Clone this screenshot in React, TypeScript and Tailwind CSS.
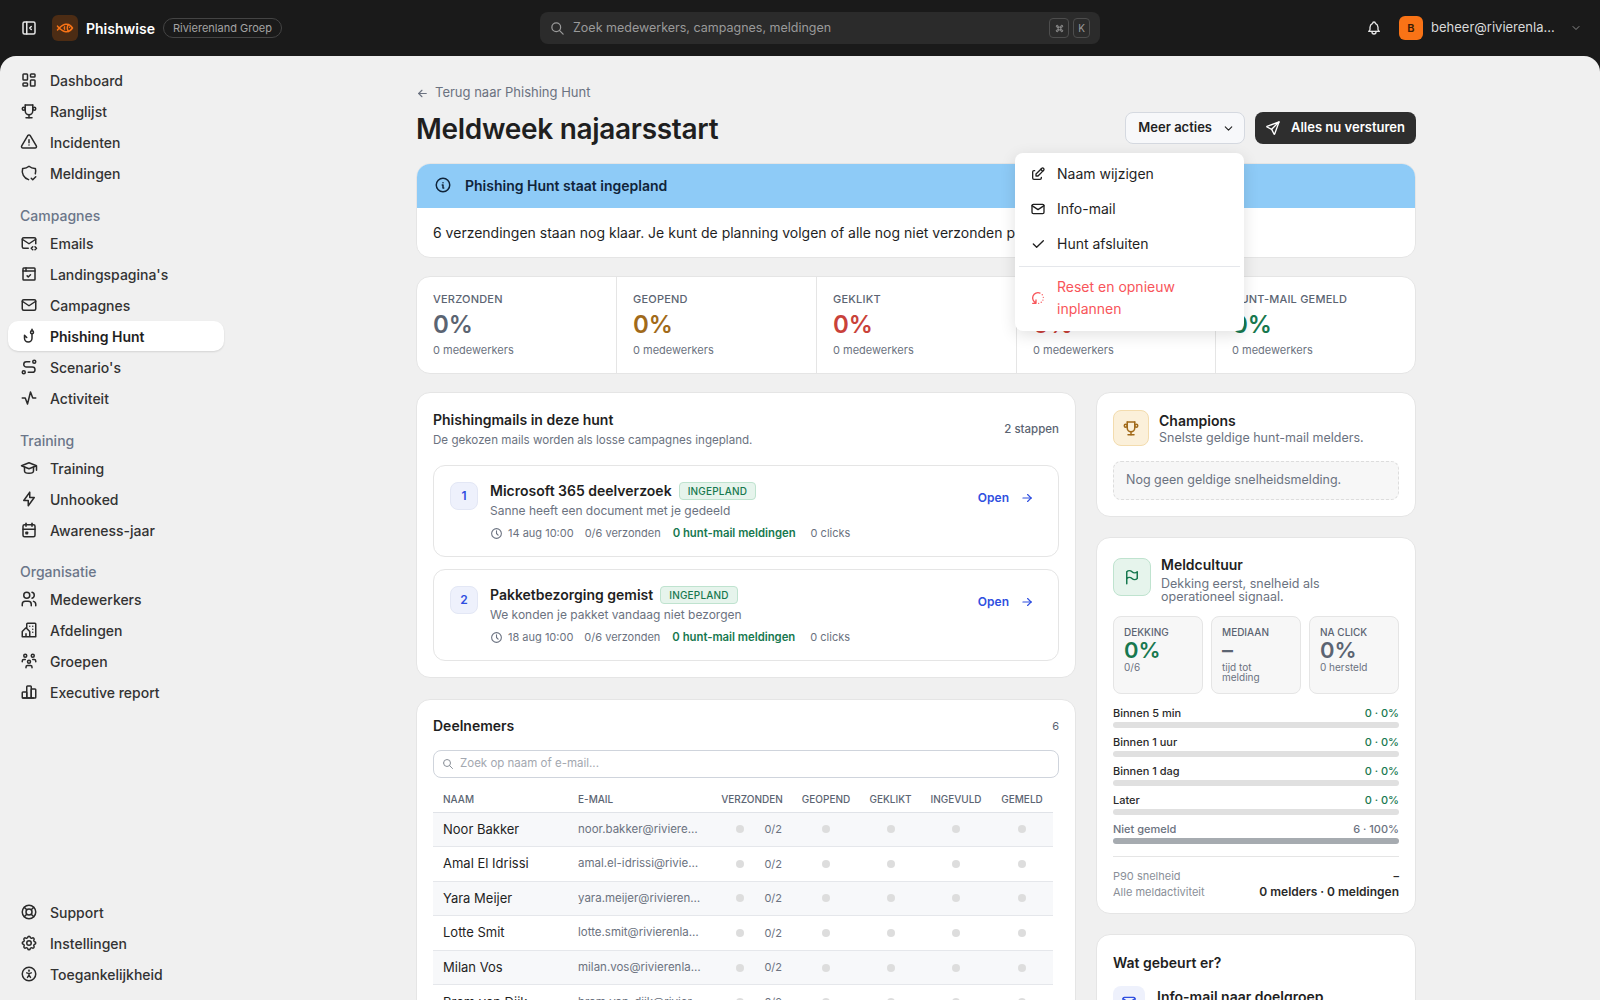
import React from 'react';
import {
  TbLayoutSidebarLeftCollapse, TbFish, TbSearch, TbCommand, TbBell, TbChevronDown,
  TbLayoutDashboard, TbTrophy, TbAlertTriangle, TbShieldCheck, TbMailCode, TbBrowserCheck, TbMail,
  TbFishHook, TbRoute, TbActivity, TbSchool, TbBolt, TbCalendarEvent, TbUsers, TbBuildingCommunity,
  TbUsersGroup, TbChartBar, TbLifebuoy, TbSettings, TbAccessible, TbArrowLeft, TbArrowRight, TbSend,
  TbEdit, TbCheck, TbRotate2, TbInfoCircle, TbClock, TbFlag,
} from 'react-icons/tb';

type NavEntry = { label: string; icon: React.ComponentType<{ className?: string }>; active?: boolean };

const mainNav: NavEntry[] = [
  { label: 'Dashboard', icon: TbLayoutDashboard },
  { label: 'Ranglijst', icon: TbTrophy },
  { label: 'Incidenten', icon: TbAlertTriangle },
  { label: 'Meldingen', icon: TbShieldCheck },
];
const campagneNav: NavEntry[] = [
  { label: 'Emails', icon: TbMailCode },
  { label: "Landingspagina's", icon: TbBrowserCheck },
  { label: 'Campagnes', icon: TbMail },
  { label: 'Phishing Hunt', icon: TbFishHook, active: true },
  { label: "Scenario's", icon: TbRoute },
  { label: 'Activiteit', icon: TbActivity },
];
const trainingNav: NavEntry[] = [
  { label: 'Training', icon: TbSchool },
  { label: 'Unhooked', icon: TbBolt },
  { label: 'Awareness-jaar', icon: TbCalendarEvent },
];
const orgNav: NavEntry[] = [
  { label: 'Medewerkers', icon: TbUsers },
  { label: 'Afdelingen', icon: TbBuildingCommunity },
  { label: 'Groepen', icon: TbUsersGroup },
  { label: 'Executive report', icon: TbChartBar },
];
const bottomNav: NavEntry[] = [
  { label: 'Support', icon: TbLifebuoy },
  { label: 'Instellingen', icon: TbSettings },
  { label: 'Toegankelijkheid', icon: TbAccessible },
];

const stats = [
  { label: 'VERZONDEN', color: 'text-[#5b6472]' },
  { label: 'GEOPEND', color: 'text-[#a16a1a]' },
  { label: 'GEKLIKT', color: 'text-[#c9423a]' },
  { label: 'INGEVULD', color: 'text-[#c9423a]' },
  { label: 'HUNT-MAIL GEMELD', color: 'text-[#17784f]' },
];

const mails = [
  { nr: 1, title: 'Microsoft 365 deelverzoek', sub: 'Sanne heeft een document met je gedeeld', date: '14 aug 10:00' },
  { nr: 2, title: 'Pakketbezorging gemist', sub: 'We konden je pakket vandaag niet bezorgen', date: '18 aug 10:00' },
];

const people = [
  ['Noor Bakker', 'noor.bakker@rivierenland.nl'],
  ['Amal El Idrissi', 'amal.el-idrissi@rivierenland.nl'],
  ['Yara Meijer', 'yara.meijer@rivierenland.nl'],
  ['Lotte Smit', 'lotte.smit@rivierenland.nl'],
  ['Milan Vos', 'milan.vos@rivierenland.nl'],
  ['Bram van Dijk', 'bram.van-dijk@rivierenland.nl'],
];

const buckets = ['Binnen 5 min', 'Binnen 1 uur', 'Binnen 1 dag', 'Later'];

function NavItem({ item }: { item: NavEntry }) {
  const Icon = item.icon;
  return (
    <div
      className={`flex items-center h-[30px] mb-[1px] pl-[12px] gap-[12px] rounded-[10px] text-[14px] ${
        item.active ? 'bg-white shadow-[0_1px_2px_rgba(0,0,0,0.12)] font-semibold text-[#1f1f1f]' : 'font-medium text-[#333333]'
      }`}
    >
      <Icon className="w-[18px] h-[18px] shrink-0 text-[#2a2a2a]" />
      <span>{item.label}</span>
    </div>
  );
}

function NavGroup({ title, items, className }: { title: string; items: NavEntry[]; className: string }) {
  return (
    <div className={className}>
      <div className="h-[25px] pl-[12px] flex items-center text-[14px] font-medium text-[#6b7689]">{title}</div>
      {items.map((i) => (
        <NavItem key={i.label} item={i} />
      ))}
    </div>
  );
}

function Dot() {
  return <span className="block w-2 h-2 rounded-full bg-[#dddddd]" />;
}

export default function App() {
  return (
    <div className="h-screen overflow-hidden flex flex-col bg-[#1a1a1a] font-['Inter','Liberation_Sans',sans-serif] text-[#1f1f1f]">
      <header className="h-[56px] shrink-0 flex items-center text-white">
        <div className="flex items-center w-[520px] pl-[20px]">
          <TbLayoutSidebarLeftCollapse className="w-[18px] h-[18px] text-[#e5e5e5]" />
          <div className="ml-[14px] w-[26px] h-[26px] rounded-[6px] bg-[#4c2c14] flex items-center justify-center">
            <TbFish className="w-[18px] h-[18px] text-[#f97316]" />
          </div>
          <span className="ml-[8px] text-[14px] font-semibold">Phishwise</span>
          <span className="ml-[8px] h-[20px] px-[9px] flex items-center rounded-full border border-[#444444] text-[11px] text-[#a3a3a3]">
            Rivierenland Groep
          </span>
        </div>
        <div className="ml-[20px] w-[560px] h-[32px] rounded-[8px] bg-[#2b2b2b] flex items-center pl-[10px] pr-[10px]">
          <TbSearch className="w-[15px] h-[15px] text-[#9a9a9a]" />
          <span className="ml-[8px] text-[12.5px] text-[#9a9a9a]">Zoek medewerkers, campagnes, meldingen</span>
          <div className="ml-auto flex gap-[4px]">
            <span className="w-[20px] h-[20px] rounded-[4px] border border-[#4d4d4d] flex items-center justify-center text-[#9a9a9a]">
              <TbCommand className="w-[11px] h-[11px]" />
            </span>
            <span className="w-[17px] h-[20px] rounded-[4px] border border-[#4d4d4d] flex items-center justify-center text-[10px] text-[#9a9a9a]">
              K
            </span>
          </div>
        </div>
        <div className="ml-auto flex items-center pr-[18px]">
          <TbBell className="w-[16px] h-[16px] text-[#e5e5e5]" />
          <span className="ml-[17px] w-[24px] h-[24px] rounded-[6px] bg-[#f97316] flex items-center justify-center text-[11px] font-semibold text-[#3a1c05]">
            B
          </span>
          <span className="ml-[8px] w-[128px] truncate text-[13px] text-[#d9d9d9]">beheer@rivierenland.nl</span>
          <TbChevronDown className="ml-[11px] w-[12px] h-[12px] text-[#8a8a8a]" />
        </div>
      </header>

      <div className="flex-1 min-h-0 flex rounded-t-[16px] bg-[#f0f0f0] overflow-hidden">
        <aside className="w-[232px] shrink-0 px-[8px] pt-[9px] pb-[10px] flex flex-col justify-between">
          <div>
            {mainNav.map((i) => (
              <NavItem key={i.label} item={i} />
            ))}
            <NavGroup className="mt-[15px]" title="Campagnes" items={campagneNav} />
            <NavGroup className="mt-[15px]" title="Training" items={trainingNav} />
            <NavGroup className="mt-[14px]" title="Organisatie" items={orgNav} />
          </div>
          <div>
            {bottomNav.map((i) => (
              <NavItem key={i.label} item={i} />
            ))}
          </div>
        </aside>

        <main className="flex-1 min-w-0 pt-[28px]">
          <div className="relative w-[1000px] mx-auto">
            <div className="flex items-center gap-[6px] text-[13px] text-[#6b7280] h-[18px]">
              <TbArrowLeft className="w-[13px] h-[13px]" />
              <span>Terug naar Phishing Hunt</span>
            </div>
            <div className="mt-[10px] flex items-center justify-between h-[32px]">
              <h1 className="pt-[2px] text-[28px] font-semibold tracking-[-0.3px] text-[#1f1f1f]">Meldweek najaarsstart</h1>
              <div className="flex gap-[10px]">
                <button className="h-[32px] pl-[12px] pr-[9px] rounded-[8px] border border-[#d5d9e0] bg-[#f7f8fa] flex items-center gap-[10px] text-[13px] font-semibold text-[#1f1f1f]">
                  Meer acties
                  <TbChevronDown className="w-[13px] h-[13px]" />
                </button>
                <button className="h-[32px] pl-[10px] pr-[11px] rounded-[8px] bg-[#2e2e2e] flex items-center gap-[10px] text-[13px] font-semibold text-white">
                  <TbSend className="w-[16px] h-[16px]" />
                  Alles nu versturen
                </button>
              </div>
            </div>

            {/* dropdown van Meer acties */}
            <div className="absolute z-10 left-[599px] top-[69px] w-[229px] h-[178px] rounded-[8px] bg-white shadow-[0_4px_16px_rgba(0,0,0,0.12)] text-[14px] text-[#1f1f1f]">
              <div className="flex items-center h-[35px] mt-[3px] pl-[15px] gap-[11px]">
                <TbEdit className="w-[16px] h-[16px]" />
                Naam wijzigen
              </div>
              <div className="flex items-center h-[35px] pl-[15px] gap-[11px]">
                <TbMail className="w-[16px] h-[16px]" />
                Info-mail
              </div>
              <div className="flex items-center h-[35px] pl-[15px] gap-[11px]">
                <TbCheck className="w-[16px] h-[16px]" />
                Hunt afsluiten
              </div>
              <div className="mx-[4px] mt-[5px] border-t border-[#e5e7eb]" />
              <div className="flex items-center pl-[15px] gap-[11px] mt-[9px] text-[#f8555a] leading-[22px]">
                <TbRotate2 className="w-[16px] h-[16px] shrink-0" />
                <span>
                  Reset en opnieuw
                  <br />
                  inplannen
                </span>
              </div>
            </div>

            <section className="mt-[19px] h-[95px] rounded-[14px] border border-[#e5e5e5] bg-white overflow-hidden">
              <div className="h-[44px] pb-[2px] bg-[#8ecbf7] flex items-center pl-[17px] gap-[13px] text-[14px] font-semibold text-[#10243a]">
                <TbInfoCircle className="w-[18px] h-[18px]" />
                Phishing Hunt staat ingepland
              </div>
              <p className="mt-[14px] pl-[16px] text-[14px] text-[#1f1f1f] whitespace-nowrap">
                6 verzendingen staan nog klaar. Je kunt de planning volgen of alle nog niet verzonden phishingmails nu versturen.
              </p>
            </section>

            <section className="mt-[18px] h-[98px] rounded-[14px] border border-[#e5e5e5] bg-white grid grid-cols-[200px_200px_200px_199px_1fr] divide-x divide-[#e5e5e5]">
              {stats.map((s) => (
                <div key={s.label} className="px-[16px] pt-[15px]">
                  <div className="text-[11px] font-medium tracking-[0.2px] text-[#5b6472] leading-[14px]">{s.label}</div>
                  <div className={`mt-[4px] text-[24px] font-semibold leading-[30px] ${s.color}`}>0%</div>
                  <div className="mt-[3px] text-[11px] text-[#6b7280] leading-[14px]">0 medewerkers</div>
                </div>
              ))}
            </section>

            <div className="mt-[18px] grid grid-cols-[660px_320px] gap-[20px] items-start">
              <div className="flex flex-col gap-[21px]">
                <section className="h-[286px] rounded-[14px] border border-[#e5e5e5] bg-white px-[16px] pt-[18px]">
                  <div className="flex items-center justify-between">
                    <div>
                      <h2 className="text-[14px] font-semibold leading-[18px]">Phishingmails in deze hunt</h2>
                      <p className="mt-[4px] text-[11.6px] text-[#6b7280] leading-[15px]">De gekozen mails worden als losse campagnes ingepland.</p>
                    </div>
                    <span className="text-[11.5px] font-medium text-[#5b6472]">2 stappen</span>
                  </div>
                  <div className="mt-[17px] flex flex-col gap-[12px]">
                    {mails.map((m) => (
                      <div key={m.nr} className="h-[92px] rounded-[12px] border border-[#e5e5e5] flex pl-[16px] pr-[24px] pt-[16px]">
                        <span className="w-[28px] h-[28px] shrink-0 rounded-[8px] border border-[#e3e7f5] bg-[#eef1fc] flex items-center justify-center text-[12px] font-semibold text-[#2f4fe0]">
                          {m.nr}
                        </span>
                        <div className="ml-[12px] flex-1">
                          <div className="flex items-center gap-[7px]">
                            <span className="text-[14px] font-semibold leading-[18px]">{m.title}</span>
                            <span className="h-[18px] px-[8px] rounded-[4px] border border-[#bfe3cf] bg-[#e6f4ec] flex items-center text-[10px] font-medium tracking-[0.2px] text-[#17784f]">
                              INGEPLAND
                            </span>
                          </div>
                          <div className="mt-[3px] text-[12px] text-[#6b7280] leading-[16px]">{m.sub}</div>
                          <div className="mt-[6px] flex items-center text-[11px] text-[#6b7280] leading-[16px]">
                            <TbClock className="w-[13px] h-[13px]" />
                            <span className="ml-[5px]">{m.date}</span>
                            <span className="ml-[11px]">0/6 verzonden</span>
                            <span className="ml-[12px] text-[11.3px] font-semibold text-[#17784f]">0 hunt-mail meldingen</span>
                            <span className="ml-[15px]">0 clicks</span>
                          </div>
                        </div>
                        <div className="flex items-center gap-[11px] h-[32px] text-[12px] font-semibold text-[#2f4fe0]">
                          Open
                          <TbArrowRight className="w-[14px] h-[14px]" />
                        </div>
                      </div>
                    ))}
                  </div>
                </section>

                <section className="h-[400px] rounded-[14px] border border-[#e5e5e5] bg-white px-[16px] pt-[17px]">
                  <div className="flex items-center justify-between">
                    <h2 className="text-[14px] font-semibold leading-[18px]">Deelnemers</h2>
                    <span className="text-[11px] text-[#5b6472]">6</span>
                  </div>
                  <div className="mt-[15px] h-[28px] rounded-[8px] border border-[#cfd4dc] flex items-center pl-[8px] gap-[6px] text-[11.5px] text-[#a3a8b0]">
                    <TbSearch className="w-[12px] h-[12px] text-[#8a9099]" />
                    Zoek op naam of e-mail...
                  </div>
                  <table className="mt-[9px] w-[620px] table-fixed border-collapse">
                    <colgroup>
                      <col className="w-[134px]" />
                      <col className="w-[145px]" />
                      <col className="w-[80px]" />
                      <col className="w-[68px]" />
                      <col className="w-[61px]" />
                      <col className="w-[70px]" />
                      <col className="w-[62px]" />
                    </colgroup>
                    <thead>
                      <tr className="h-[25px] border-b border-[#e0e3e8] text-[10px] font-medium text-[#5b6472]">
                        <th className="pl-[10px] text-left font-medium">NAAM</th>
                        <th className="text-left pl-[11px] font-medium">E-MAIL</th>
                        <th className="text-center font-medium">VERZONDEN</th>
                        <th className="text-center font-medium">GEOPEND</th>
                        <th className="text-center font-medium">GEKLIKT</th>
                        <th className="text-center font-medium">INGEVULD</th>
                        <th className="text-center font-medium">GEMELD</th>
                      </tr>
                    </thead>
                    <tbody>
                      {people.map(([naam, mail], idx) => (
                        <tr key={mail} className={`h-[34.6px] border-b border-[#e5e7eb] ${idx % 2 === 0 ? 'bg-[#f7f8fa]' : 'bg-white'}`}>
                          <td className="pl-[10px] text-[13px] text-[#1f1f1f]">{naam}</td>
                          <td className="pl-[11px] pr-[10px] text-[11.5px] text-[#6b7280]">
                            <div className="truncate">{mail}</div>
                          </td>
                          <td className="pr-[10px]">
                            <div className="flex items-center justify-between pl-[24px]">
                              <Dot />
                              <span className="text-[11px] text-[#6b7280]">0/2</span>
                            </div>
                          </td>
                          <td><div className="flex justify-center"><Dot /></div></td>
                          <td><div className="flex justify-center"><Dot /></div></td>
                          <td><div className="flex justify-center"><Dot /></div></td>
                          <td><div className="flex justify-center"><Dot /></div></td>
                        </tr>
                      ))}
                    </tbody>
                  </table>
                </section>
              </div>

              <div className="flex flex-col gap-[20px]">
                <section className="h-[125px] rounded-[14px] border border-[#e5e5e5] bg-white px-[16px] pt-[16px]">
                  <div className="flex items-center gap-[10px]">
                    <span className="w-[36px] h-[36px] shrink-0 rounded-[8px] border border-[#f3dcae] bg-[#fbf0da] flex items-center justify-center">
                      <TbTrophy className="w-[18px] h-[18px] text-[#a16a1a]" />
                    </span>
                    <div className="pt-[3px]">
                      <div className="text-[14px] font-semibold leading-[18px]">Champions</div>
                      <div className="text-[12.5px] text-[#6b7280] leading-[16px]">Snelste geldige hunt-mail melders.</div>
                    </div>
                  </div>
                  <div className="mt-[15px] h-[39px] rounded-[8px] border border-dashed border-[#dddddd] bg-[#f7f7f7] flex items-center pl-[12px] text-[12.5px] text-[#6b7280]">
                    Nog geen geldige snelheidsmelding.
                  </div>
                </section>

                <section className="h-[377px] rounded-[14px] border border-[#e5e5e5] bg-white px-[16px] pt-[20px]">
                  <div className="flex items-start gap-[10px]">
                    <span className="w-[38px] h-[38px] shrink-0 rounded-[8px] border border-[#bfe3cf] bg-[#e6f4ec] flex items-center justify-center">
                      <TbFlag className="w-[18px] h-[18px] text-[#17784f]" />
                    </span>
                    <div className="mt-[-2px]">
                      <div className="text-[14px] font-semibold leading-[18px]">Meldcultuur</div>
                      <div className="max-w-[200px] text-[12.5px] text-[#6b7280] leading-[13px] mt-[3px]">Dekking eerst, snelheid als operationeel signaal.</div>
                    </div>
                  </div>
                  <div className="mt-[13px] grid grid-cols-3 gap-[8px]">
                    <div className="h-[78px] rounded-[8px] border border-[#e5e5e5] bg-[#f7f7f7] px-[10px] pt-[9px]">
                      <div className="text-[10px] font-medium text-[#5b6472] leading-[12px]">DEKKING</div>
                      <div className="text-[22px] font-semibold leading-[24px] text-[#17784f]">0%</div>
                      <div className="text-[10px] text-[#6b7280] leading-[10px]">0/6</div>
                    </div>
                    <div className="h-[78px] rounded-[8px] border border-[#e5e5e5] bg-[#f7f7f7] px-[10px] pt-[9px]">
                      <div className="text-[10px] font-medium text-[#5b6472] leading-[12px]">MEDIAAN</div>
                      <div className="text-[22px] font-semibold leading-[24px] text-[#5b6472]">–</div>
                      <div className="text-[10px] text-[#6b7280] leading-[10px]">tijd tot<br />melding</div>
                    </div>
                    <div className="h-[78px] rounded-[8px] border border-[#e5e5e5] bg-[#f7f7f7] px-[10px] pt-[9px]">
                      <div className="text-[10px] font-medium text-[#5b6472] leading-[12px]">NA CLICK</div>
                      <div className="text-[22px] font-semibold leading-[24px] text-[#5b6472]">0%</div>
                      <div className="text-[10px] text-[#6b7280] leading-[10px]">0 hersteld</div>
                    </div>
                  </div>
                  <div className="mt-[11px] flex flex-col gap-[6px]">
                    {buckets.map((b) => (
                      <div key={b}>
                        <div className="flex justify-between text-[11px] font-medium leading-[17px]">
                          <span className="text-[#2a2a2a]">{b}</span>
                          <span className="text-[#17784f]">0 · 0%</span>
                        </div>
                        <div className="h-[6px] rounded-full bg-[#e0e0e0]" />
                      </div>
                    ))}
                    <div>
                      <div className="flex justify-between text-[11px] font-medium leading-[17px] text-[#6b7280]">
                        <span>Niet gemeld</span>
                        <span>6 · 100%</span>
                      </div>
                      <div className="h-[6px] rounded-full bg-[#a6abb0]" />
                    </div>
                  </div>
                  <div className="mt-[12px] pt-[11px] border-t border-[#e5e5e5] text-[11px] leading-[16px]">
                    <div className="flex justify-between text-[#8a8f98]">
                      <span>P90 snelheid</span>
                      <span className="font-semibold text-[#2a2a2a]">–</span>
                    </div>
                    <div className="flex justify-between items-center text-[#8a8f98]">
                      <span>Alle meldactiviteit</span>
                      <span className="text-[12px] font-semibold text-[#2a2a2a]">0 melders · 0 meldingen</span>
                    </div>
                  </div>
                </section>

                <section className="h-[200px] rounded-[14px] border border-[#e5e5e5] bg-white px-[16px] pt-[19px]">
                  <h2 className="text-[14px] font-semibold leading-[18px]">Wat gebeurt er?</h2>
                  <div className="mt-[14px] flex gap-[12px]">
                    <span className="w-[32px] h-[32px] shrink-0 rounded-[8px] bg-[#eef1fc] flex items-center justify-center">
                      <TbMail className="w-[16px] h-[16px] text-[#2f4fe0]" />
                    </span>
                    <span className="text-[14px] font-semibold">Info-mail naar doelgroep</span>
                  </div>
                </section>
              </div>
            </div>
          </div>
        </main>
      </div>
    </div>
  );
}
